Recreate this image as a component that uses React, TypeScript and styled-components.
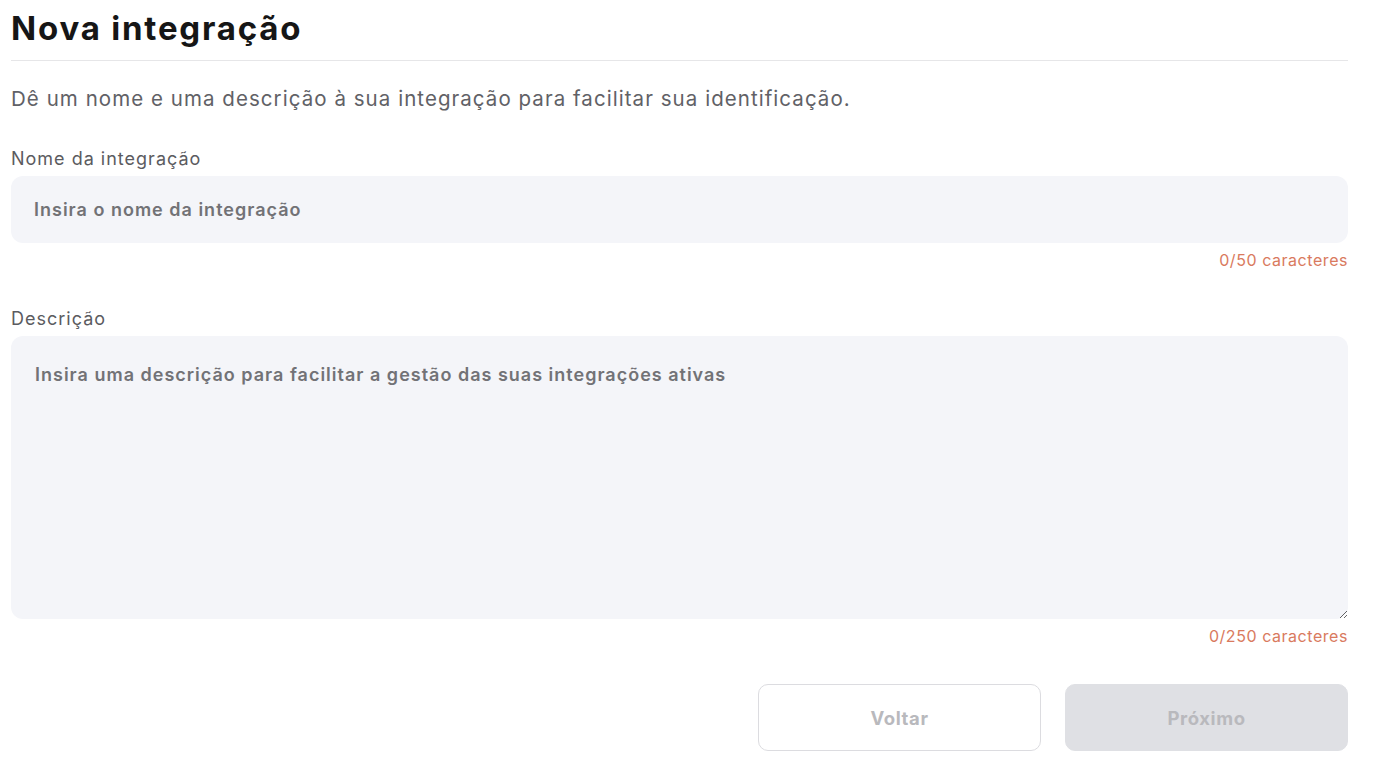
import { createGlobalStyle } from 'styled-components';
import styled from 'styled-components';

const GlobalStyle = createGlobalStyle`
  body {
    margin: 0;
    background: #ffffff;
    font-family: Inter, "Noto Sans", sans-serif;
  }
`;

const Page = styled.div`
  padding: 4px 30px 0 11px;
`;

const Title = styled.h1`
  margin: 0;
  font-size: 33px;
  line-height: 48px;
  font-weight: 700;
  color: #161616;
  letter-spacing: 1.8px;
  padding-bottom: 8px;
  border-bottom: 1px solid #e6e6e8;
`;

const Subtitle = styled.p`
  margin: 24px 0 0;
  font-size: 20.5px;
  line-height: 28px;
  letter-spacing: 1.05px;
  color: #616166;
`;

const Field = styled.div<{ $gap?: number }>`
  margin-top: ${(p) => p.$gap ?? 34}px;
  display: flex;
  flex-direction: column;
`;

const Label = styled.label`
  font-size: 18px;
  line-height: 24px;
  letter-spacing: 1px;
  color: #5b5b60;
  margin-bottom: 5px;
`;

const TextInput = styled.input`
  height: 67px;
  box-sizing: border-box;
  border: none;
  outline: none;
  border-radius: 12px;
  background: #f4f5f9;
  padding: 0 23px;
  font-family: Inter, sans-serif;
  font-size: 18px;
  font-weight: 600;
  letter-spacing: 1px;
  color: #333;
  &::placeholder {
    color: #727276;
  }
`;

const TextArea = styled.textarea`
  height: 283px;
  box-sizing: border-box;
  border: none;
  outline: none;
  border-radius: 12px;
  background: #f4f5f9;
  padding: 27px 24px;
  font-family: Inter, sans-serif;
  font-size: 18px;
  font-weight: 600;
  letter-spacing: 1px;
  line-height: 24px;
  color: #333;
  resize: vertical;
  &::placeholder {
    color: #727276;
  }
`;

const Counter = styled.span`
  align-self: flex-end;
  margin-top: 7px;
  font-size: 16px;
  line-height: 20px;
  letter-spacing: 0.55px;
  color: #d97a5e;
`;

const Actions = styled.div`
  margin-top: 38px;
  display: flex;
  justify-content: flex-end;
  gap: 24px;
`;

const Button = styled.button<{ $primary?: boolean }>`
  width: 283px;
  height: 67px;
  border-radius: 10px;
  font-family: Inter, sans-serif;
  font-size: 18.5px;
  font-weight: 700;
  letter-spacing: 0.6px;
  color: #b9b9bd;
  cursor: default;
  border: 1px solid ${(p) => (p.$primary ? '#dfe0e4' : '#dcdce0')};
  background: ${(p) => (p.$primary ? '#dfe0e4' : '#ffffff')};
`;

export default function App() {
  return (
    <Page>
      <GlobalStyle />
      <Title>Nova integração</Title>
      <Subtitle>
        Dê um nome e uma descrição à sua integração para facilitar sua identificação.
      </Subtitle>
      <Field>
        <Label>Nome da integração</Label>
        <TextInput placeholder='Insira o nome da integração' />
        <Counter>0/50 caracteres</Counter>
      </Field>
      <Field $gap={37}>
        <Label>Descrição</Label>
        <TextArea placeholder='Insira uma descrição para facilitar a gestão das suas integrações ativas' />
        <Counter>0/250 caracteres</Counter>
      </Field>
      <Actions>
        <Button>Voltar</Button>
        <Button $primary disabled>
          Próximo
        </Button>
      </Actions>
    </Page>
  );
}
